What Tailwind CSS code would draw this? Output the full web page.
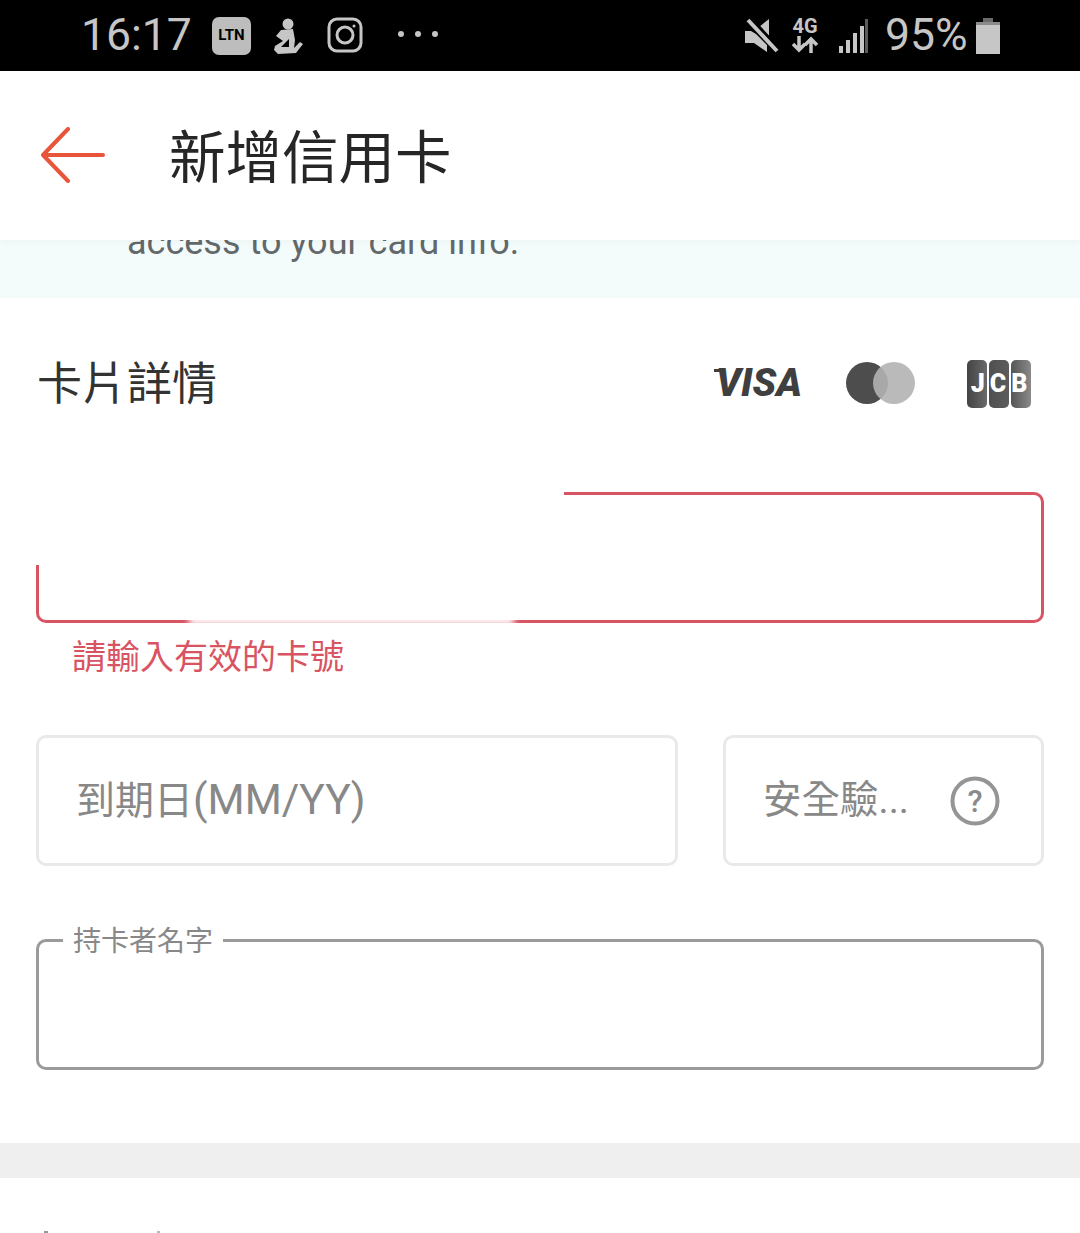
<!DOCTYPE html>
<html lang="zh-Hant">
<head>
  <meta charset="UTF-8">
  <meta name="viewport" content="width=device-width, initial-scale=1.0">
  <script src="https://cdn.jsdelivr.net/npm/@tailwindcss/browser@4"></script>
  <title>新增信用卡</title>
</head>
<body class="bg-white font-['Roboto','Noto_Sans_CJK_TC',sans-serif]">
  <div class="w-[1080px] h-[1233px] overflow-hidden relative">

    <!-- status bar -->
    <div class="h-[71px] bg-black flex items-center justify-between pl-[81px] pr-[80px] text-[#c6c6c6]">
      <div class="flex items-center">
        <span class="text-[44.5px] font-normal leading-none w-[131px]">16:17</span>
        <span class="w-[39px] h-[38px] rounded-[7px] bg-[#bdbdbd] text-black text-[15px] font-bold flex items-center justify-center">LTN</span>
        <svg class="ml-[13px] w-[42px] h-[40px]" viewBox="0 0 42 40" fill="#c6c6c6">
          <circle cx="24" cy="8" r="5.5" />
          <path d="M17 14 L29 13 L31 24 L30 32 L36 26 L39 28 L32 37 L14 38 L10 34 L11 30 L19 25 L12 20 Z" />
          <path d="M17 31 L25 23 L25 31 Z" fill="#000" />
        </svg>
        <svg class="ml-[21px] w-[36px] h-[36px] -mt-[1px]" viewBox="0 0 36 36" fill="none" stroke="#c6c6c6" stroke-width="3">
          <rect x="2" y="2" width="32" height="32" rx="8" />
          <circle cx="18" cy="18" r="8" />
          <circle cx="27" cy="9" r="1.5" fill="#c6c6c6" stroke="none" />
        </svg>
        <div class="ml-[35px] flex gap-[11px] -mt-[3px]">
          <span class="w-[6px] h-[6px] rounded-full bg-[#c6c6c6]"></span>
          <span class="w-[6px] h-[6px] rounded-full bg-[#c6c6c6]"></span>
          <span class="w-[6px] h-[6px] rounded-full bg-[#c6c6c6]"></span>
        </div>
      </div>
      <div class="flex items-center">
        <svg class="w-[34px] h-[36px]" viewBox="0 0 34 36" fill="#c6c6c6">
          <path d="M0 13 L6 13 L11 16 L22 27 L22 34 L9 25 L0 25 Z" />
          <path d="M14 9 L24 1 L24 19 Z" />
          <path d="M3 2 L32 33" stroke="#c6c6c6" stroke-width="4" />
          <path d="M7 1 L33 29" stroke="#000" stroke-width="2.5" />
        </svg>
        <div class="ml-[10px] w-[32px] h-[38px] flex flex-col items-center">
          <span class="text-[20px] font-bold leading-[19px]">4G</span>
          <svg class="w-[28px] h-[17px]" viewBox="0 0 28 17" fill="none" stroke="#c6c6c6" stroke-width="3.5">
            <path d="M8 0 V14 M2 8 L8 14 L14 8" />
            <path d="M20 17 V3 M14 9 L20 3 L26 9" />
          </svg>
        </div>
        <svg class="ml-[17px] w-[31px] h-[36px]" viewBox="0 0 31 36">
          <rect x="1" y="28" width="4" height="7" fill="#c6c6c6" />
          <rect x="8" y="22" width="4" height="13" fill="#c6c6c6" />
          <rect x="15" y="15" width="4" height="20" fill="#c6c6c6" />
          <rect x="22" y="8" width="4" height="27" fill="#c6c6c6" />
          <rect x="27" y="1" width="3" height="34" fill="#5c5c5c" />
        </svg>
        <span class="ml-[16px] text-[44.5px] font-normal leading-none w-[91px]">95%</span>
        <svg class="w-[24px] h-[36px]" viewBox="0 0 24 36" fill="#c6c6c6">
          <rect x="7" y="0" width="10" height="4" fill="#6b6b6b" />
          <rect x="0" y="4" width="24" height="3" fill="#8a8a8a" />
          <rect x="0" y="7" width="24" height="29" />
        </svg>
      </div>
    </div>

    <!-- header -->
    <div class="relative z-10 h-[169px] bg-white shadow-[0_2px_6px_rgba(0,0,0,0.03)] flex items-center pl-[41px] pb-[2px]">
      <svg class="w-[64px] h-[56px]" viewBox="0 0 64 56" fill="none" stroke="#e8553a" stroke-width="4" stroke-linecap="round" stroke-linejoin="round">
        <path d="M62 28 H2 M27 2 L2 28 L27 54" />
      </svg>
      <h1 class="ml-[64px] mt-[9px] text-[56.5px] leading-none text-[#262626] font-normal">新增信用卡</h1>
    </div>

    <!-- notice, scrolled under the header -->
    <div class="h-[58px] bg-[#f4fcfb] overflow-hidden pl-[127px]">
      <p class="-mt-[21px] text-[36px] leading-[46px] text-[#63686b]">access to your card info.</p>
    </div>

    <!-- card details -->
    <div class="h-[170px] pl-[37px] pr-[49px] flex items-center justify-between">
      <h2 class="mt-[2px] text-[45px] leading-none text-[#333333] font-normal">卡片詳情</h2>
      <div class="flex items-center">
        <div class="relative pl-[3px]">
          <span class="absolute left-[1px] top-[5px] w-[11px] h-[3px] bg-[#3f3f3f]"></span>
          <span class="block text-[39px] font-black italic leading-none text-[#3f3f3f]">VISA</span>
        </div>
        <div class="ml-[44px] relative w-[69px] h-[42px]">
          <span class="absolute left-0 top-0 w-[42px] h-[42px] rounded-full bg-[#4d4d4d]"></span>
          <span class="absolute right-0 top-0 w-[42px] h-[42px] rounded-full bg-[#b3b3b3]/90"></span>
        </div>
        <div class="ml-[52px] mt-[2px] relative w-[64px] h-[48px] flex gap-[2px]">
          <span class="w-[20px] rounded-[5px] bg-gradient-to-r from-[#444444] to-[#6a6a6a]"></span>
          <span class="w-[20px] rounded-[5px] bg-gradient-to-r from-[#505050] to-[#5c5c5c]"></span>
          <span class="w-[20px] rounded-[5px] bg-gradient-to-r from-[#555555] to-[#8a8a8a]"></span>
          <span class="absolute inset-0 flex items-center justify-center text-[25px] font-black text-white tracking-[5px] pl-[5px]">JCB</span>
        </div>
      </div>
    </div>

    <!-- card number, partly blanked out in the screenshot -->
    <div class="mt-[24px] mx-[36px] h-[131px] relative rounded-[10px] border-[3px] border-[#d95463]">
      <div class="absolute -left-[5px] -top-[5px] w-[530px] h-[75px] bg-white"></div>
      <div class="absolute left-[150px] -bottom-[5px] w-[325px] h-[10px] bg-white blur-[3px]"></div>
    </div>
    <p class="mt-[12px] ml-[72px] text-[34px] leading-[44px] text-[#d95463]">請輸入有效的卡號</p>

    <!-- expiry and security code -->
    <div class="mt-[56px] mx-[36px] flex gap-[45px]">
      <div class="w-[642px] h-[131px] rounded-[10px] border-[3px] border-[#e9e9e9] flex items-center pl-[37px]">
        <span class="text-[39px] leading-none text-[#888888]">到期日<span class="text-[42.5px]">(MM/YY)</span></span>
      </div>
      <div class="w-[321px] h-[131px] rounded-[10px] border-[3px] border-[#e9e9e9] flex items-center pl-[37px]">
        <span class="text-[38.5px] leading-none text-[#888888] w-[187px] whitespace-nowrap">安全驗...</span>
        <svg class="w-[50px] h-[50px]" viewBox="0 0 50 50" fill="none">
          <circle cx="25" cy="25" r="22.5" stroke="#959595" stroke-width="4" />
          <text x="25" y="36" text-anchor="middle" font-size="31" font-weight="500" font-family="Roboto" fill="#8a8a8a">?</text>
        </svg>
      </div>
    </div>

    <!-- cardholder name -->
    <div class="mt-[73px] mx-[36px] h-[131px] relative rounded-[10px] border-[3px] border-[#9a9a9a]">
      <span class="absolute left-[24px] -top-[18px] px-[10px] bg-white text-[28px] leading-[36px] text-[#888888]">持卡者名字</span>
    </div>

    <div class="mt-[73px] h-[35px] bg-[#efefef]"></div>

    <!-- tops of the next row, cut by the bottom of the screen -->
    <div class="mt-[53px] pl-[44px] flex gap-[109px]">
      <span class="w-[4px] h-[2px] bg-[#999999]"></span>
      <span class="w-[3px] h-[2px] bg-[#bbbbbb]"></span>
    </div>
  </div>
</body>
</html>
